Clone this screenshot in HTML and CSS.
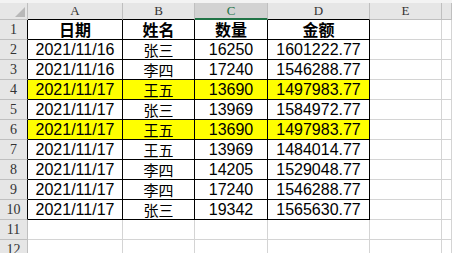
FILE: index.html
```html
<!DOCTYPE html>
<html>
<head>
<meta charset="utf-8">
<link rel="stylesheet" href="styles.css">
</head>
<body>
<div class="topstrip"></div>
<div class="sheet">
  <div class="ch corner"><svg width="10" height="10" viewBox="0 0 10 10"><polygon points="10,0 10,10 0,10" fill="#b8b8b8"/></svg></div>
  <div class="ch tb">A</div><div class="ch tb">B</div><div class="ch sel">C</div><div class="ch tb">D</div><div class="ch">E</div><div class="ch"></div>

  <div class="rh tr">1</div><div class="c t h">日期</div><div class="c t h">姓名</div><div class="c t h">数量</div><div class="c t h r">金额</div><div class="c"></div><div class="c"></div>
  <div class="rh tr">2</div><div class="c t">2021/11/16</div><div class="c t cj">张三</div><div class="c t">16250</div><div class="c t r">1601222.77</div><div class="c"></div><div class="c"></div>
  <div class="rh tr">3</div><div class="c t">2021/11/16</div><div class="c t cj">李四</div><div class="c t">17240</div><div class="c t r">1546288.77</div><div class="c"></div><div class="c"></div>
  <div class="rh tr">4</div><div class="c t y">2021/11/17</div><div class="c t y cj">王五</div><div class="c t y">13690</div><div class="c t y r">1497983.77</div><div class="c"></div><div class="c"></div>
  <div class="rh tr">5</div><div class="c t">2021/11/17</div><div class="c t cj">张三</div><div class="c t">13969</div><div class="c t r">1584972.77</div><div class="c"></div><div class="c"></div>
  <div class="rh tr">6</div><div class="c t y">2021/11/17</div><div class="c t y cj">王五</div><div class="c t y">13690</div><div class="c t y r">1497983.77</div><div class="c"></div><div class="c"></div>
  <div class="rh tr">7</div><div class="c t">2021/11/17</div><div class="c t cj">王五</div><div class="c t">13969</div><div class="c t r">1484014.77</div><div class="c"></div><div class="c"></div>
  <div class="rh tr">8</div><div class="c t">2021/11/17</div><div class="c t cj">李四</div><div class="c t">14205</div><div class="c t r">1529048.77</div><div class="c"></div><div class="c"></div>
  <div class="rh tr">9</div><div class="c t">2021/11/17</div><div class="c t cj">李四</div><div class="c t">17240</div><div class="c t r">1546288.77</div><div class="c"></div><div class="c"></div>
  <div class="rh tr">10</div><div class="c t">2021/11/17</div><div class="c t cj">张三</div><div class="c t">19342</div><div class="c t r">1565630.77</div><div class="c"></div><div class="c"></div>
  <div class="rh">11</div><div class="c"></div><div class="c"></div><div class="c"></div><div class="c"></div><div class="c"></div><div class="c"></div>
  <div class="rh">12</div><div class="c"></div><div class="c"></div><div class="c"></div><div class="c"></div><div class="c"></div><div class="c"></div>
</div>
</body>
</html>
```
FILE: styles.css
```css
html, body {
  margin: 0;
  padding: 0;
  background: #ffffff;
  overflow: hidden;
}
.topstrip {
  height: 3px;
  background: #f3f3f3;
}
.sheet {
  display: grid;
  grid-template-columns: 28px 95px 72px 73px 102px 72px 10px;
  grid-template-rows: 17px repeat(12, 20px);
}
.sheet > div {
  box-sizing: border-box;
  border-right: 1px solid #d4d4d4;
  border-bottom: 1px solid #d4d4d4;
  display: flex;
  align-items: center;
  justify-content: center;
  white-space: nowrap;
  line-height: 19px;
  min-width: 0;
}
.ch {
  background: #e6e6e6;
  border-right-color: #bfbfbf !important;
  border-bottom-color: #bfbfbf !important;
  font-family: "Liberation Serif", serif;
  font-size: 13px;
  line-height: 16px !important;
  color: #333;
}
.ch.tb {
  border-bottom-color: #000 !important;
}
.ch.sel {
  background: #d2d2d2;
  color: #217346;
  border-bottom: 2px solid #217346 !important;
}
.corner {
  justify-content: flex-end !important;
  align-items: flex-end !important;
  padding: 0 2px 2px 0;
}
.rh {
  background: #e6e6e6;
  border-right-color: #bfbfbf !important;
  border-bottom-color: #bfbfbf !important;
  font-family: "Liberation Serif", serif;
  font-size: 14px;
  color: #333;
}
.rh.tr {
  border-right-color: #000 !important;
}
.c {
  font-family: "Liberation Sans", Arial, sans-serif;
  font-size: 16px;
  color: #000;
}
.c.t {
  border-bottom-color: #000;
  border-right-color: #000;
}
.cj {
  font-family: "Noto Sans CJK SC", sans-serif;
  font-size: 15px;
}
.h {
  font-family: "Noto Sans CJK SC", sans-serif;
  font-weight: bold;
  font-size: 16px;
}
.y {
  background: #ffff00;
}
```
